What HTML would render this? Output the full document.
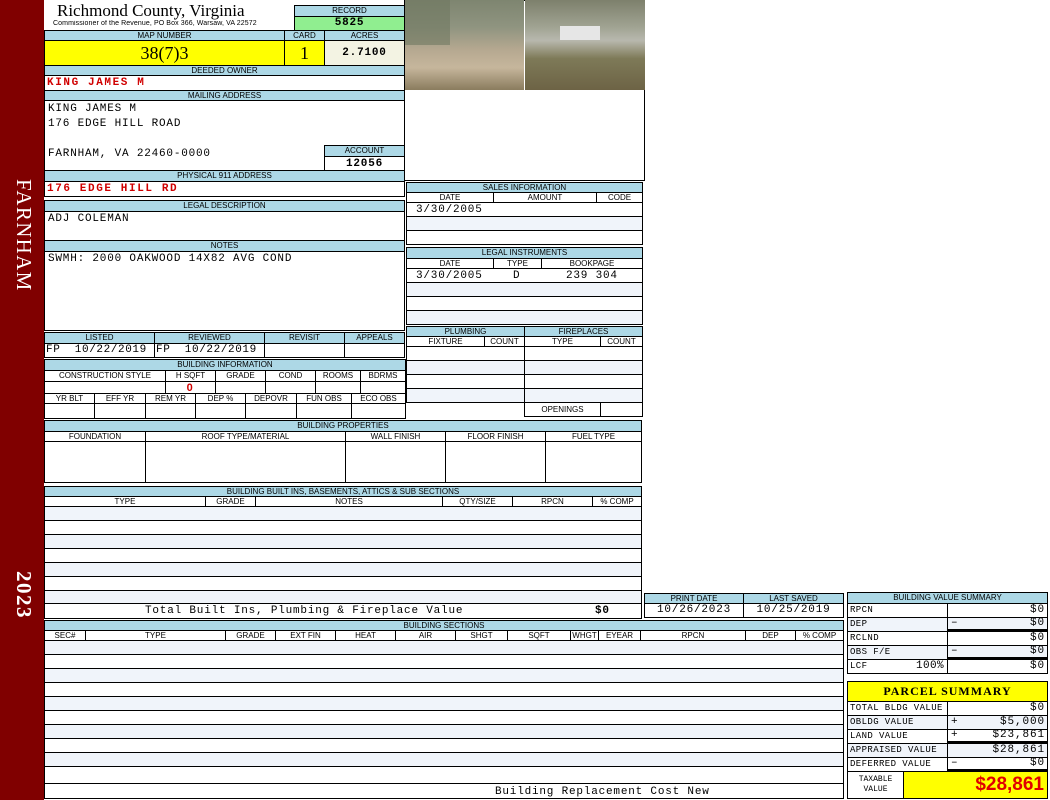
<!DOCTYPE html>
<html><head><meta charset="utf-8"><style>
body{margin:0;width:1050px;height:800px;background:#fff;position:relative;overflow:hidden;font-family:"Liberation Sans",sans-serif}
div{position:absolute;box-sizing:border-box;white-space:nowrap;overflow:hidden}
.c{border:1px solid #000}
.h{background:#add8e6;border:1px solid #000;font-size:8px;text-align:center;line-height:9px;color:#000}
.m{font-family:"Liberation Mono",monospace;font-size:11px;letter-spacing:0.8px}
.r{color:#d00000;font-weight:bold;letter-spacing:1.6px}
.a{background:#f0f4fa;border-top:1px solid #000}
.w{border-top:1px solid #000}
.s{font-family:"Liberation Mono",monospace;font-size:9px;line-height:13px;padding-left:2px;letter-spacing:0.4px}
.v{font-family:"Liberation Mono",monospace;font-size:11px;line-height:13px;letter-spacing:0.9px;text-align:right;padding-right:2px}
</style></head><body>
<div style="left:0;top:0;width:44px;height:800px;background:#800000"></div>
<div style="left:10px;top:179px;width:26px;height:128px;writing-mode:vertical-rl;font-family:'Liberation Serif',serif;font-size:21px;letter-spacing:1.3px;color:#fff;line-height:24px">FARNHAM</div>
<div style="left:10px;top:571px;width:26px;height:55px;writing-mode:vertical-rl;font-family:'Liberation Serif',serif;font-size:21px;letter-spacing:1.5px;color:#fff;line-height:24px;font-weight:bold">2023</div>

<!-- header -->
<div style="left:57px;top:1px;width:230px;height:22px;font-family:'Liberation Serif',serif;font-size:17px">Richmond County, Virginia</div>
<div style="left:53px;top:20px;width:240px;height:10px;font-size:7px;letter-spacing:0.1px">Commissioner of the Revenue, PO Box 366, Warsaw, VA 22572</div>
<div class="h" style="left:294px;top:5px;width:111px;height:12px">RECORD</div>
<div class="c m" style="left:294px;top:16px;width:111px;height:15px;background:#90ee90;text-align:center;font-weight:bold;line-height:13px">5825</div>
<div class="h" style="left:44px;top:30px;width:241px;height:11px">MAP NUMBER</div>
<div class="h" style="left:284px;top:30px;width:41px;height:11px">CARD</div>
<div class="h" style="left:324px;top:30px;width:81px;height:11px">ACRES</div>
<div class="c" style="left:44px;top:40px;width:241px;height:26px;background:#ffff00;text-align:center;font-family:'Liberation Serif',serif;font-size:18px;line-height:24px">38(7)3</div>
<div class="c" style="left:284px;top:40px;width:41px;height:26px;background:#ffff00;text-align:center;font-family:'Liberation Serif',serif;font-size:18px;line-height:24px">1</div>
<div class="c m" style="left:324px;top:40px;width:81px;height:26px;background:#f3f3e3;text-align:center;font-weight:bold;line-height:24px">2.7100</div>
<div class="h" style="left:44px;top:65px;width:361px;height:11px">DEEDED OWNER</div>
<div class="c m r" style="left:44px;top:75px;width:361px;height:16px;padding-left:2px;line-height:15px">KING JAMES M</div>
<div class="h" style="left:44px;top:90px;width:361px;height:11px">MAILING ADDRESS</div>
<div class="c m" style="left:44px;top:100px;width:361px;height:71px;padding:1px 3px;line-height:15px;white-space:pre">KING JAMES M
176 EDGE HILL ROAD

FARNHAM, VA 22460-0000</div>
<div class="h" style="left:324px;top:145px;width:81px;height:12px">ACCOUNT</div>
<div class="c m" style="left:324px;top:156px;width:81px;height:15px;text-align:center;font-weight:bold;line-height:14px">12056</div>
<div class="h" style="left:44px;top:170px;width:361px;height:12px">PHYSICAL 911 ADDRESS</div>
<div class="c m r" style="left:44px;top:181px;width:361px;height:16px;padding-left:2px;line-height:14px">176 EDGE HILL RD</div>
<div class="h" style="left:44px;top:200px;width:361px;height:12px">LEGAL DESCRIPTION</div>
<div class="c m" style="left:44px;top:211px;width:361px;height:30px;padding-left:3px;line-height:15px">ADJ COLEMAN</div>
<div class="h" style="left:44px;top:240px;width:361px;height:12px">NOTES</div>
<div class="c m" style="left:44px;top:251px;width:361px;height:80px;padding-left:3px;line-height:15px">SWMH: 2000 OAKWOOD 14X82 AVG COND</div>

<!-- listed -->
<div class="h" style="left:44px;top:332px;width:111px;height:12px">LISTED</div>
<div class="h" style="left:154px;top:332px;width:111px;height:12px">REVIEWED</div>
<div class="h" style="left:264px;top:332px;width:81px;height:12px">REVISIT</div>
<div class="h" style="left:344px;top:332px;width:61px;height:12px">APPEALS</div>
<div class="c m" style="left:44px;top:343px;width:111px;height:15px;line-height:13px;padding-left:1px;white-space:pre;letter-spacing:0.6px">FP  10/22/2019</div>
<div class="c m" style="left:154px;top:343px;width:111px;height:15px;line-height:13px;padding-left:1px;white-space:pre;letter-spacing:0.6px">FP  10/22/2019</div>
<div class="c" style="left:264px;top:343px;width:81px;height:15px"></div>
<div class="c" style="left:344px;top:343px;width:61px;height:15px"></div>

<div class="h" style="left:44px;top:359px;width:362px;height:12px">BUILDING INFORMATION</div>
<div class="c" style="left:44px;top:370px;width:362px;height:49px"></div>
<div class="c" style="left:44px;top:370px;width:122px;height:12px;font-size:8px;text-align:center;line-height:10px">CONSTRUCTION STYLE</div>
<div class="c" style="left:165px;top:370px;width:51px;height:12px;font-size:8px;text-align:center;line-height:10px">H SQFT</div>
<div class="c" style="left:215px;top:370px;width:51px;height:12px;font-size:8px;text-align:center;line-height:10px">GRADE</div>
<div class="c" style="left:265px;top:370px;width:51px;height:12px;font-size:8px;text-align:center;line-height:10px">COND</div>
<div class="c" style="left:315px;top:370px;width:46px;height:12px;font-size:8px;text-align:center;line-height:10px">ROOMS</div>
<div class="c" style="left:360px;top:370px;width:46px;height:12px;font-size:8px;text-align:center;line-height:10px">BDRMS</div>
<div class="c" style="left:44px;top:381px;width:122px;height:13px"></div>
<div class="c r" style="left:165px;top:381px;width:51px;height:13px;font-size:11px;text-align:center;line-height:12px">0</div>
<div class="c" style="left:215px;top:381px;width:51px;height:13px"></div>
<div class="c" style="left:265px;top:381px;width:51px;height:13px"></div>
<div class="c" style="left:315px;top:381px;width:46px;height:13px"></div>
<div class="c" style="left:360px;top:381px;width:46px;height:13px"></div>
<div class="c" style="left:44px;top:393px;width:51px;height:11px;font-size:8px;text-align:center;line-height:9px">YR BLT</div>
<div class="c" style="left:94px;top:393px;width:52px;height:11px;font-size:8px;text-align:center;line-height:9px">EFF YR</div>
<div class="c" style="left:145px;top:393px;width:51px;height:11px;font-size:8px;text-align:center;line-height:9px">REM YR</div>
<div class="c" style="left:195px;top:393px;width:51px;height:11px;font-size:8px;text-align:center;line-height:9px">DEP %</div>
<div class="c" style="left:245px;top:393px;width:52px;height:11px;font-size:8px;text-align:center;line-height:9px">DEPOVR</div>
<div class="c" style="left:296px;top:393px;width:56px;height:11px;font-size:8px;text-align:center;line-height:9px">FUN OBS</div>
<div class="c" style="left:351px;top:393px;width:55px;height:11px;font-size:8px;text-align:center;line-height:9px">ECO OBS</div>
<div class="c" style="left:44px;top:403px;width:51px;height:16px"></div>
<div class="c" style="left:94px;top:403px;width:52px;height:16px"></div>
<div class="c" style="left:145px;top:403px;width:51px;height:16px"></div>
<div class="c" style="left:195px;top:403px;width:51px;height:16px"></div>
<div class="c" style="left:245px;top:403px;width:52px;height:16px"></div>
<div class="c" style="left:296px;top:403px;width:56px;height:16px"></div>
<div class="c" style="left:351px;top:403px;width:55px;height:16px"></div>

<!-- photos -->
<div class="c" style="left:404px;top:0;width:241px;height:181px"></div>
<div style="left:405px;top:0;width:119px;height:90px;background:linear-gradient(180deg,#7e8570 0%,#8f9480 30%,#b5a890 55%,#c6b69c 75%,#8a7c5e 100%)"></div>
<div style="left:405px;top:0;width:45px;height:45px;background:#6f7860;opacity:0.6"></div>
<div style="left:525px;top:0;width:120px;height:90px;background:linear-gradient(180deg,#7d806c 0%,#a0a392 30%,#b8b8ae 45%,#7e7a58 65%,#6d6345 100%)"></div>
<div style="left:560px;top:26px;width:40px;height:14px;background:#e6e6e6"></div>

<!-- sales -->
<div class="h" style="left:406px;top:182px;width:237px;height:11px">SALES INFORMATION</div>
<div class="c" style="left:406px;top:192px;width:237px;height:53px"></div>
<div class="c" style="left:406px;top:192px;width:88px;height:11px;font-size:8px;text-align:center;line-height:9px">DATE</div>
<div class="c" style="left:493px;top:192px;width:104px;height:11px;font-size:8px;text-align:center;line-height:9px">AMOUNT</div>
<div class="c" style="left:596px;top:192px;width:47px;height:11px;font-size:8px;text-align:center;line-height:9px">CODE</div>
<div class="m" style="left:416px;top:203px;width:100px;height:14px;line-height:14px">3/30/2005</div>
<div class="a" style="left:407px;top:216px;width:235px;height:14px"></div>
<div class="w" style="left:407px;top:230px;width:235px;height:14px"></div>

<div class="h" style="left:406px;top:247px;width:237px;height:12px">LEGAL INSTRUMENTS</div>
<div class="c" style="left:406px;top:258px;width:237px;height:67px"></div>
<div class="c" style="left:406px;top:258px;width:88px;height:11px;font-size:8px;text-align:center;line-height:9px">DATE</div>
<div class="c" style="left:493px;top:258px;width:49px;height:11px;font-size:8px;text-align:center;line-height:9px">TYPE</div>
<div class="c" style="left:541px;top:258px;width:102px;height:11px;font-size:8px;text-align:center;line-height:9px">BOOKPAGE</div>
<div class="m" style="left:416px;top:269px;width:226px;height:14px;line-height:14px"><span style="position:absolute;left:0">3/30/2005</span><span style="position:absolute;left:97px">D</span><span style="position:absolute;left:150px">239 304</span></div>
<div class="a" style="left:407px;top:282px;width:235px;height:14px"></div>
<div class="w" style="left:407px;top:296px;width:235px;height:14px"></div>
<div class="a" style="left:407px;top:310px;width:235px;height:14px"></div>

<!-- plumbing -->
<div class="h" style="left:406px;top:326px;width:119px;height:11px">PLUMBING</div>
<div class="h" style="left:524px;top:326px;width:119px;height:11px">FIREPLACES</div>
<div class="c" style="left:406px;top:336px;width:79px;height:11px;font-size:8px;text-align:center;line-height:9px">FIXTURE</div>
<div class="c" style="left:484px;top:336px;width:41px;height:11px;font-size:8px;text-align:center;line-height:9px">COUNT</div>
<div class="c" style="left:524px;top:336px;width:77px;height:11px;font-size:8px;text-align:center;line-height:9px">TYPE</div>
<div class="c" style="left:600px;top:336px;width:43px;height:11px;font-size:8px;text-align:center;line-height:9px">COUNT</div>
<div class="c" style="left:406px;top:346px;width:119px;height:57px"></div>
<div class="a" style="left:407px;top:360px;width:117px;height:14px"></div>
<div class="w" style="left:407px;top:374px;width:117px;height:14px"></div>
<div class="a" style="left:407px;top:388px;width:117px;height:14px"></div>
<div class="c" style="left:524px;top:346px;width:119px;height:71px"></div>
<div class="a" style="left:525px;top:360px;width:117px;height:14px"></div>
<div class="w" style="left:525px;top:374px;width:117px;height:14px"></div>
<div class="a" style="left:525px;top:388px;width:117px;height:14px"></div>
<div class="c" style="left:524px;top:402px;width:77px;height:15px;font-size:8px;text-align:center;line-height:13px">OPENINGS</div>
<div class="c" style="left:600px;top:402px;width:43px;height:15px"></div>

<!-- building properties -->
<div class="h" style="left:44px;top:420px;width:598px;height:12px">BUILDING PROPERTIES</div>
<div class="c" style="left:44px;top:431px;width:102px;height:11px;font-size:8px;text-align:center;line-height:9px">FOUNDATION</div>
<div class="c" style="left:145px;top:431px;width:201px;height:11px;font-size:8px;text-align:center;line-height:9px">ROOF TYPE/MATERIAL</div>
<div class="c" style="left:345px;top:431px;width:101px;height:11px;font-size:8px;text-align:center;line-height:9px">WALL FINISH</div>
<div class="c" style="left:445px;top:431px;width:101px;height:11px;font-size:8px;text-align:center;line-height:9px">FLOOR FINISH</div>
<div class="c" style="left:545px;top:431px;width:97px;height:11px;font-size:8px;text-align:center;line-height:9px">FUEL TYPE</div>
<div class="c" style="left:44px;top:441px;width:102px;height:42px"></div>
<div class="c" style="left:145px;top:441px;width:201px;height:42px"></div>
<div class="c" style="left:345px;top:441px;width:101px;height:42px"></div>
<div class="c" style="left:445px;top:441px;width:101px;height:42px"></div>
<div class="c" style="left:545px;top:441px;width:97px;height:42px"></div>

<!-- built ins -->
<div class="h" style="left:44px;top:486px;width:598px;height:11px">BUILDING BUILT INS, BASEMENTS, ATTICS &amp; SUB SECTIONS</div>
<div class="c" style="left:44px;top:506px;width:598px;height:113px"></div>
<div class="a" style="left:45px;top:507px;width:596px;height:13px;border-top:0"></div>
<div class="w" style="left:45px;top:520px;width:596px;height:14px"></div>
<div class="a" style="left:45px;top:534px;width:596px;height:14px"></div>
<div class="w" style="left:45px;top:548px;width:596px;height:14px"></div>
<div class="a" style="left:45px;top:562px;width:596px;height:14px"></div>
<div class="w" style="left:45px;top:576px;width:596px;height:14px"></div>
<div class="a" style="left:45px;top:590px;width:596px;height:13px"></div>
<div class="w m" style="left:45px;top:603px;width:596px;height:15px;line-height:15px"><span style="position:absolute;left:100px">Total Built Ins, Plumbing &amp; Fireplace Value</span><span style="position:absolute;left:550px;font-weight:bold">$0</span></div>
<div class="c" style="left:44px;top:496px;width:162px;height:11px;font-size:8px;text-align:center;line-height:9px;background:#fff">TYPE</div>
<div class="c" style="left:205px;top:496px;width:51px;height:11px;font-size:8px;text-align:center;line-height:9px;background:#fff">GRADE</div>
<div class="c" style="left:255px;top:496px;width:188px;height:11px;font-size:8px;text-align:center;line-height:9px;background:#fff">NOTES</div>
<div class="c" style="left:442px;top:496px;width:71px;height:11px;font-size:8px;text-align:center;line-height:9px;background:#fff">QTY/SIZE</div>
<div class="c" style="left:512px;top:496px;width:81px;height:11px;font-size:8px;text-align:center;line-height:9px;background:#fff">RPCN</div>
<div class="c" style="left:592px;top:496px;width:50px;height:11px;font-size:8px;text-align:center;line-height:9px;background:#fff">% COMP</div>

<!-- print date -->
<div class="h" style="left:644px;top:593px;width:100px;height:11px">PRINT DATE</div>
<div class="h" style="left:743px;top:593px;width:101px;height:11px">LAST SAVED</div>
<div class="c m" style="left:644px;top:603px;width:100px;height:15px;text-align:center;line-height:13px">10/26/2023</div>
<div class="c m" style="left:743px;top:603px;width:101px;height:15px;text-align:center;line-height:13px">10/25/2019</div>

<!-- building sections -->
<div class="h" style="left:44px;top:620px;width:800px;height:11px">BUILDING SECTIONS</div>
<div class="c" style="left:44px;top:640px;width:800px;height:159px"></div>
<div class="a" style="left:45px;top:641px;width:798px;height:13px;border-top:0"></div>
<div class="w" style="left:45px;top:654px;width:798px;height:14px"></div>
<div class="a" style="left:45px;top:668px;width:798px;height:14px"></div>
<div class="w" style="left:45px;top:682px;width:798px;height:14px"></div>
<div class="a" style="left:45px;top:696px;width:798px;height:14px"></div>
<div class="w" style="left:45px;top:710px;width:798px;height:14px"></div>
<div class="a" style="left:45px;top:724px;width:798px;height:14px"></div>
<div class="w" style="left:45px;top:738px;width:798px;height:14px"></div>
<div class="a" style="left:45px;top:752px;width:798px;height:14px"></div>
<div class="w" style="left:45px;top:766px;width:798px;height:17px"></div>
<div class="w m" style="left:45px;top:783px;width:798px;height:15px;line-height:16px"><span style="position:absolute;left:450px">Building Replacement Cost New</span></div>
<div class="c" style="left:44px;top:630px;width:42px;height:11px;font-size:8px;text-align:center;line-height:9px;background:#fff">SEC#</div>
<div class="c" style="left:85px;top:630px;width:141px;height:11px;font-size:8px;text-align:center;line-height:9px;background:#fff">TYPE</div>
<div class="c" style="left:225px;top:630px;width:51px;height:11px;font-size:8px;text-align:center;line-height:9px;background:#fff">GRADE</div>
<div class="c" style="left:275px;top:630px;width:61px;height:11px;font-size:8px;text-align:center;line-height:9px;background:#fff">EXT FIN</div>
<div class="c" style="left:335px;top:630px;width:61px;height:11px;font-size:8px;text-align:center;line-height:9px;background:#fff">HEAT</div>
<div class="c" style="left:395px;top:630px;width:61px;height:11px;font-size:8px;text-align:center;line-height:9px;background:#fff">AIR</div>
<div class="c" style="left:455px;top:630px;width:53px;height:11px;font-size:8px;text-align:center;line-height:9px;background:#fff">SHGT</div>
<div class="c" style="left:507px;top:630px;width:64px;height:11px;font-size:8px;text-align:center;line-height:9px;background:#fff">SQFT</div>
<div class="c" style="left:570px;top:630px;width:29px;height:11px;font-size:8px;text-align:center;line-height:9px;background:#fff">WHGT</div>
<div class="c" style="left:598px;top:630px;width:43px;height:11px;font-size:8px;text-align:center;line-height:9px;background:#fff">EYEAR</div>
<div class="c" style="left:640px;top:630px;width:106px;height:11px;font-size:8px;text-align:center;line-height:9px;background:#fff">RPCN</div>
<div class="c" style="left:745px;top:630px;width:51px;height:11px;font-size:8px;text-align:center;line-height:9px;background:#fff">DEP</div>
<div class="c" style="left:795px;top:630px;width:49px;height:11px;font-size:8px;text-align:center;line-height:9px;background:#fff">% COMP</div>

<!-- building value summary -->
<div class="h" style="left:847px;top:592px;width:201px;height:12px">BUILDING VALUE SUMMARY</div>
<div class="c" style="left:847px;top:603px;width:201px;height:71px"></div>
<div class="c s" style="left:847px;top:603px;width:101px;height:15px">RPCN</div>
<div class="c v" style="left:947px;top:603px;width:101px;height:15px">$0</div>
<div class="c s" style="left:847px;top:617px;width:101px;height:15px;background:#f0f4fa">DEP</div>
<div class="c v" style="left:947px;top:617px;width:101px;height:15px;background:#f0f4fa;border-bottom:3px solid #000;line-height:11px"><span style="position:absolute;left:3px">–</span>$0</div>
<div class="c s" style="left:847px;top:631px;width:101px;height:15px">RCLND</div>
<div class="c v" style="left:947px;top:631px;width:101px;height:15px">$0</div>
<div class="c s" style="left:847px;top:645px;width:101px;height:15px;background:#f0f4fa">OBS F/E</div>
<div class="c v" style="left:947px;top:645px;width:101px;height:15px;background:#f0f4fa;border-bottom:3px solid #000;line-height:11px"><span style="position:absolute;left:3px">–</span>$0</div>
<div class="c s" style="left:847px;top:659px;width:101px;height:15px">LCF<span style="position:absolute;right:3px;font-size:11px">100%</span></div>
<div class="c v" style="left:947px;top:659px;width:101px;height:15px">$0</div>

<!-- parcel summary -->
<div class="c" style="left:847px;top:681px;width:201px;height:21px;background:#ffff00;text-align:center;font-family:'Liberation Serif',serif;font-weight:bold;font-size:12px;line-height:19px;letter-spacing:1px">PARCEL SUMMARY</div>
<div class="c s" style="left:847px;top:701px;width:101px;height:15px">TOTAL BLDG VALUE</div>
<div class="c v" style="left:947px;top:701px;width:101px;height:15px">$0</div>
<div class="c s" style="left:847px;top:715px;width:101px;height:15px;background:#f0f4fa">OBLDG VALUE</div>
<div class="c v" style="left:947px;top:715px;width:101px;height:15px;background:#f0f4fa"><span style="position:absolute;left:3px">+</span>$5,000</div>
<div class="c s" style="left:847px;top:729px;width:101px;height:15px">LAND VALUE</div>
<div class="c v" style="left:947px;top:729px;width:101px;height:15px;border-bottom:3px solid #000;line-height:11px"><span style="position:absolute;left:3px">+</span>$23,861</div>
<div class="c s" style="left:847px;top:743px;width:101px;height:15px;background:#f0f4fa">APPRAISED VALUE</div>
<div class="c v" style="left:947px;top:743px;width:101px;height:15px;background:#f0f4fa">$28,861</div>
<div class="c s" style="left:847px;top:757px;width:101px;height:15px">DEFERRED VALUE</div>
<div class="c v" style="left:947px;top:757px;width:101px;height:15px;border-bottom:3px solid #000;line-height:11px"><span style="position:absolute;left:3px">–</span>$0</div>
<div class="c" style="left:847px;top:771px;width:57px;height:28px;font-family:'Liberation Mono',monospace;font-size:8px;text-align:center;line-height:10px;padding-top:3px;white-space:normal">TAXABLE<br>VALUE</div>
<div class="c" style="left:903px;top:771px;width:145px;height:28px;background:#ffff00;color:#e00000;font-weight:bold;font-size:19px;text-align:right;padding-right:3px;line-height:26px">$28,861</div>
</body></html>
